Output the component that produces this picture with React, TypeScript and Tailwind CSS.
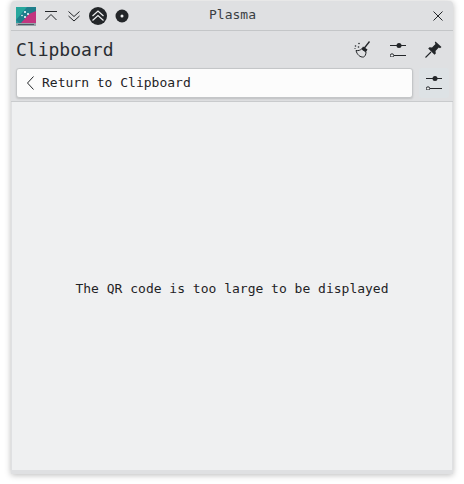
import React from "react";

const mono = "font-['DejaVu_Sans_Mono','Liberation_Mono',monospace]";

function Sliders({ className }: { className?: string }) {
  return (
    <svg viewBox="0 0 16 14" width="16" height="14" className={className}>
      <path d="M0 2.500H16" stroke="#232629" strokeWidth="1" />
      <circle cx="9" cy="2.500" r="2.500" fill="#232629" />
      <path d="M4 12.500H16" stroke="#232629" strokeWidth="1" />
      <circle cx="2" cy="12.500" r="1.700" fill="#eff0f1" stroke="#232629" strokeWidth="1" />
    </svg>
  );
}

export default function App() {
  return (
    <div className="w-[464px] h-[484px] bg-white pl-[11px] pt-[1px]">
      <div className={`w-[442px] h-[473px] flex flex-col bg-[#dfe0e2] rounded-t-[4px] text-[#1f2326] shadow-[0_1px_6px_rgba(0,0,0,0.28)] ${mono}`}>
        <div className="h-[30px] shrink-0 flex items-center border-b border-[#c4c6c8] pl-[5px] pr-[9px] relative">
          <svg viewBox="0 0 20 20" width="20" height="20" className="shrink-0">
            <rect x="0" y="1" width="20" height="17" fill="#1f7f8c" />
            <path d="M0 1H11L0 14Z" fill="#27a79d" />
            <path d="M20 5V17H5L13 8Z" fill="#c2357f" />
            <path d="M0 14 3 17H0Z" fill="#2b9fa0" />
            <rect x="0" y="17" width="20" height="3" fill="#9aa5ab" />
            <rect x="2" y="18" width="16" height="1" fill="#4e5a63" />
            <circle cx="9" cy="6" r="1" fill="#fff" />
            <circle cx="12" cy="8" r="1" fill="#fff" />
            <circle cx="9" cy="11" r="1" fill="#fff" />
            <circle cx="6" cy="9.500" r="0.800" fill="#fff" />
          </svg>
          <svg viewBox="0 0 16 16" width="16" height="16" className="ml-[7px] shrink-0">
            <path d="M2 3.500H14M2.500 12 8 6.500 13.500 12" fill="none" stroke="#232629" strokeWidth="1" />
          </svg>
          <svg viewBox="0 0 16 16" width="16" height="16" className="ml-[7px] shrink-0">
            <path d="M2.500 3.500 8 8.500 13.500 3.500M2.500 8 8 13 13.500 8" fill="none" stroke="#232629" strokeWidth="1" />
          </svg>
          <svg viewBox="0 0 18 18" width="18" height="18" className="ml-[7px] shrink-0">
            <circle cx="9" cy="9" r="9" fill="#232629" />
            <path d="M3.500 9 9 4 14.500 9M3.500 13.500 9 8.500 14.500 13.500" fill="none" stroke="#eff0f1" strokeWidth="1.200" />
          </svg>
          <svg viewBox="0 0 14 14" width="14" height="14" className="ml-[8px] shrink-0">
            <circle cx="7" cy="7" r="6.500" fill="#232629" />
            <circle cx="7" cy="7" r="1.500" fill="#eff0f1" />
          </svg>
          <span className="absolute left-[198px] top-[6px] text-[13px] leading-[16px] text-[#3a3e42]">Plasma</span>
          <svg viewBox="0 0 12 12" width="12" height="12" className="ml-auto shrink-0">
            <path d="M1.500 1.500 10.500 10.500M10.500 1.500 1.500 10.500" stroke="#232629" strokeWidth="1" fill="none" />
          </svg>
        </div>

        <div className="h-[37px] shrink-0 flex items-center pl-[5px] pr-[11px]">
          <span className="text-[18px] leading-[22px] mt-[1px] text-[#2a2e32]">Clipboard</span>
          <svg viewBox="0 0 17 17" width="17" height="17" className="ml-auto shrink-0">
            <path d="M10 7.500 15.500 0.500" stroke="#232629" strokeWidth="1.300" fill="none" />
            <path d="M9 5.500 13.500 8.500 12 11 7.500 8Z" fill="#232629" />
            <path d="M2 9.500C4.500 10 6.500 9 7.500 8L12 11C12 13.500 11 15.500 9.500 16 6 16.500 3 13.500 2 9.500Z" fill="none" stroke="#232629" strokeWidth="1" />
            <circle cx="1.500" cy="5" r="0.800" fill="#232629" />
            <circle cx="5" cy="2.500" r="0.800" fill="#232629" />
            <circle cx="4.500" cy="6" r="0.800" fill="#232629" />
            <circle cx="1" cy="7.500" r="0.600" fill="#232629" />
          </svg>
          <Sliders className="ml-[19px] shrink-0" />
          <svg viewBox="0 0 17 17" width="17" height="17" className="ml-[19px] shrink-0">
            <path d="M10.500 0.500 16.500 6 15 7.200 13.800 6.500 10.500 10 10.800 12.500 9.500 13.800 3.200 7.500 4.500 6.200 7 6.500 10.500 3 9.800 1.500Z" fill="#232629" />
            <path d="M6 11 0.500 16.500" stroke="#232629" strokeWidth="1.100" />
          </svg>
        </div>

        <div className="h-[34px] shrink-0 flex items-start border-b border-[#c9cbcd] pl-[5px]">
          <div className="w-[397px] h-[30px] flex items-center bg-[#fcfcfc] rounded-[3px] border border-[#c4c6c8] shadow-[0_1px_2px_rgba(0,0,0,0.15)] pl-[9px]">
            <svg viewBox="0 0 9 16" width="9" height="16" className="shrink-0">
              <path d="M7.500 1.500 1.500 8 7.500 14.500" fill="none" stroke="#232629" strokeWidth="1" />
            </svg>
            <span className="ml-[7px] text-[13px] leading-[16px]">Return to Clipboard</span>
          </div>
          <div className="w-[30px] h-[30px] ml-[6px] flex items-center justify-center bg-[#dde2e5] rounded-[3px]">
            <Sliders />
          </div>
        </div>

        <div className="flex-1 mx-[1px] flex items-center justify-center bg-[#eff0f1]">
          <span className="text-[13px] leading-[16px] mt-[6px]">The QR code is too large to be displayed</span>
        </div>
        <div className="h-[4px] shrink-0" />
      </div>
    </div>
  );
}
